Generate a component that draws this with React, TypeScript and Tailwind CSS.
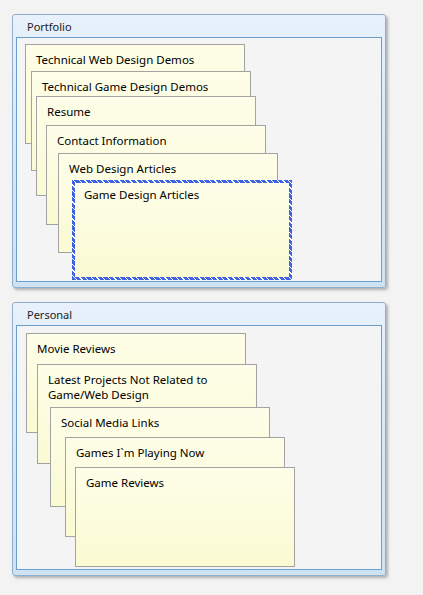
import type { ReactNode } from 'react';

interface Note {
    label: ReactNode;
    left: number;
    top: number;
    focused?: boolean;
}

const portfolio: Note[] = [
    { label: 'Technical Web Design Demos', left: 8, top: 6 },
    { label: 'Technical Game Design Demos', left: 14, top: 33 },
    { label: 'Resume', left: 19, top: 58 },
    { label: 'Contact Information', left: 29, top: 87 },
    { label: 'Web Design Articles', left: 41, top: 115 },
    { label: 'Game Design Articles', left: 55, top: 142, focused: true },
];

const personal: Note[] = [
    { label: 'Movie Reviews', left: 9, top: 7 },
    {
        label: (
            <>
                Latest Projects Not Related to
                <br />
                Game/Web Design
            </>
        ),
        left: 20,
        top: 38,
    },
    { label: 'Social Media Links', left: 33, top: 81 },
    { label: 'Games I`m Playing Now', left: 48, top: 111 },
    { label: 'Game Reviews', left: 58, top: 141 },
];

function NoteCard({ note }: { note: Note }) {
    return (
        <div
            className="absolute h-[100px] w-[220px]"
            style={{ left: note.left, top: note.top }}
        >
            {note.focused ? (
                <div className="h-full w-full bg-[repeating-linear-gradient(45deg,#3d62e3_0_3px,#ffffff_3px_4px)] p-[3px]">
                    <div className="h-full w-full bg-gradient-to-b from-[#fefee9] to-[#fafad3] pl-[9px] pt-[4px] text-[11.5px] leading-[15px] text-black">
                        {note.label}
                    </div>
                </div>
            ) : (
                <div className="h-full w-full border border-[#a3a3a3] bg-gradient-to-b from-[#fefee9] to-[#fafad3] pl-[10px] pt-[7px] text-[11.5px] leading-[15px] text-black">
                    {note.label}
                </div>
            )}
        </div>
    );
}

function Panel({ title, notes }: { title: string; notes: Note[] }) {
    return (
        <div className="h-[274px] w-[374px] rounded-[3px] border border-[#8fb0cc] bg-gradient-to-b from-[#e8f1fb] via-[#d6e7f7] to-[#cfe2f4] px-[3px] pb-[3px] shadow-[2px_2px_3px_rgba(0,0,0,0.28)]">
            <div className="h-[22px] pl-[11px] pt-[5px] text-[11px] leading-[13px] text-[#222]">{title}</div>
            <div className="relative h-[245px] border border-[#6a9ecb] bg-[#f4f4f4]">
                {notes.map((note, i) => (
                    <NoteCard key={i} note={note} />
                ))}
            </div>
        </div>
    );
}

export default function App() {
    return (
        <div className="min-h-[595px] w-[423px] bg-[#f3f3f3] pl-[12px] pt-[14px] font-['Noto_Sans',sans-serif]">
            <div className="flex flex-col gap-[14px]">
                <Panel title="Portfolio" notes={portfolio} />
                <Panel title="Personal" notes={personal} />
            </div>
        </div>
    );
}
